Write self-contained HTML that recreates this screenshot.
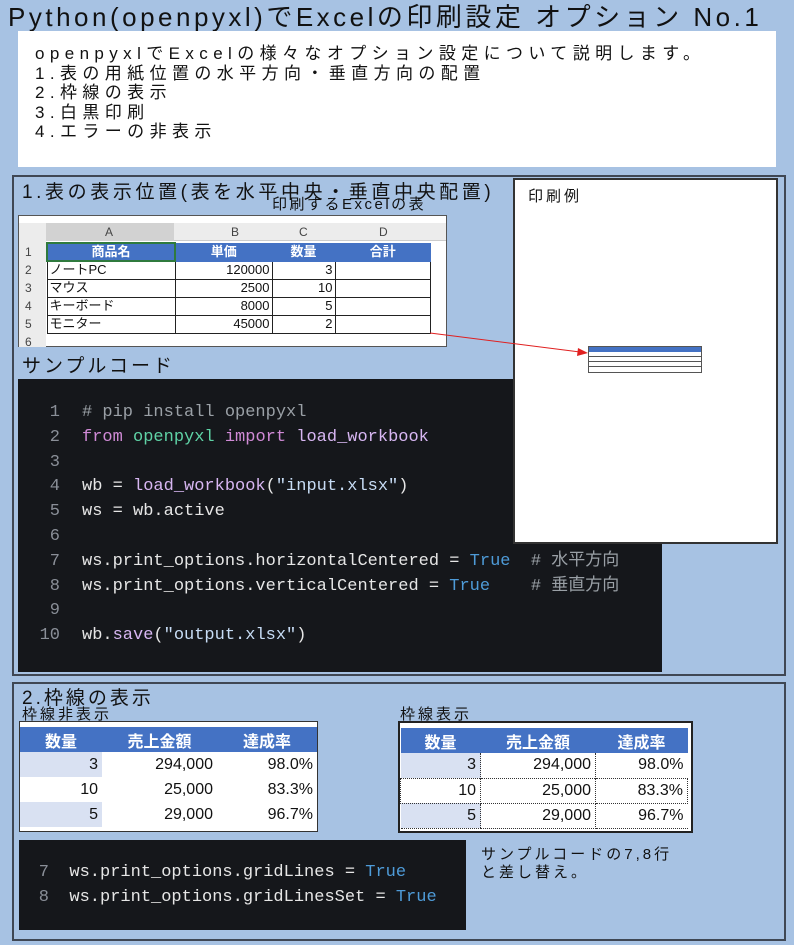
<!DOCTYPE html>
<html><head><meta charset="utf-8"><style>
*{margin:0;padding:0;box-sizing:border-box}
body{width:794px;height:945px;background:#a7c2e3;position:relative;overflow:hidden;font-family:"Liberation Sans","Noto Sans CJK JP",sans-serif;color:#111}
.a{position:absolute;white-space:nowrap}
.jp{letter-spacing:3px}
.box{position:absolute;border:2px solid #3f4754}
.code{position:absolute;background:#15171b;font-family:"Liberation Mono","Noto Sans CJK JP",monospace;font-size:17px;color:#e6e6e6}
.code .l{position:absolute;white-space:pre}
.n{color:#8a8f98;display:inline-block;text-align:right}
.kw{color:#d08ad6}.md{color:#5fd3a6}.fn{color:#d7b6f2}.tr{color:#4e9bd8}.cm{color:#9aa0a6}.st{color:#c7dcf5}
table{border-collapse:collapse}
.xt td{height:18px;line-height:16px;font-size:13px;border:1px solid #222;padding:0 2px}
.g td{font-size:16px;height:25px;padding:0 4px;text-align:right}
</style></head><body>
<div class="a" style="left:8px;top:0;font-size:26px;letter-spacing:3.5px;line-height:34px">Python(openpyxl)でExcelの印刷設定 オプション No.1</div>
<div class="a" style="left:18px;top:31px;width:758px;height:136px;background:#fff"></div>
<div class="a" style="left:35px;top:44px;font-size:17px;line-height:19.5px;letter-spacing:5.4px">openpyxlでExcelの様々なオプション設定について説明します。<br>1.表の用紙位置の水平方向・垂直方向の配置<br>2.枠線の表示<br>3.白黒印刷<br>4.エラーの非表示</div>

<div class="box" style="left:12px;top:175px;width:774px;height:501px"></div>
<div class="a" style="left:22px;top:177px;font-size:19px;letter-spacing:3.6px">1.表の表示位置(表を水平中央・垂直中央配置)</div>
<div class="a" style="left:272px;top:193px;font-size:15px;letter-spacing:2.5px">印刷するExcelの表</div>

<div class="a" style="left:18px;top:215px;width:429px;height:132px;background:#fff;border:1px solid #555">
 <div class="a" style="left:0;top:7px;width:427px;height:18px;background:#ececec;border-bottom:1px solid #ccc"></div>
 <div class="a" style="left:0;top:7px;width:27px;height:124px;background:#ececec"></div>
 <div class="a" style="left:27px;top:7px;width:128px;height:18px;background:#d2d2d2"></div>
 <div class="a" style="left:86px;top:9px;font-size:12px;color:#444">A</div>
 <div class="a" style="left:212px;top:9px;font-size:12px;color:#444">B</div>
 <div class="a" style="left:280px;top:9px;font-size:12px;color:#444">C</div>
 <div class="a" style="left:360px;top:9px;font-size:12px;color:#444">D</div>
 <div class="a" style="left:6px;top:27px;font-size:12px;line-height:18px;color:#444">1<br>2<br>3<br>4<br>5<br>6</div>
 <table class="xt a" style="left:27px;top:26px;width:385px">
  <tr style="background:#4472c4;color:#fff;font-weight:bold;text-align:center"><td style="width:128px;border:2px solid #2f7a3e">商品名</td><td style="width:97px;border-color:#4472c4">単価</td><td style="width:63px;border-color:#4472c4">数量</td><td style="border-color:#4472c4">合計</td></tr>
  <tr><td>ノートPC</td><td align="right">120000</td><td align="right">3</td><td></td></tr>
  <tr><td>マウス</td><td align="right">2500</td><td align="right">10</td><td></td></tr>
  <tr><td>キーボード</td><td align="right">8000</td><td align="right">5</td><td></td></tr>
  <tr><td>モニター</td><td align="right">45000</td><td align="right">2</td><td></td></tr>
 </table>
</div>

<div class="a" style="left:513px;top:178px;width:265px;height:366px;background:#fff;border:2px solid #333"></div>
<div class="a jp" style="left:528px;top:185px;font-size:15px">印刷例</div>
<div class="a" style="left:588px;top:346px;width:114px;height:27px;border:1px solid #555;background:#fff">
 <div style="height:5px;background:#4472c4"></div>
 <div style="height:5px;border-bottom:1px solid #555"></div><div style="height:5px;border-bottom:1px solid #555"></div><div style="height:5px;border-bottom:1px solid #555"></div>
</div>
<svg class="a" style="left:0;top:0" width="794" height="945"><line x1="430" y1="333" x2="580" y2="352" stroke="#e02020" stroke-width="1"/><polygon points="588,353 578,348 577,356" fill="#e02020"/></svg>

<div class="a jp" style="left:22px;top:351px;font-size:19px">サンプルコード</div>
<div class="code" style="left:18px;top:379px;width:644px;height:293px">
 <div class="l" style="left:0;top:22px;line-height:24.8px"><span class="n" style="width:42px;margin-right:22px">1</span><span class="cm"># pip install openpyxl</span>
<span class="n" style="width:42px;margin-right:22px">2</span><span class="kw">from</span> <span class="md">openpyxl</span> <span class="kw">import</span> <span class="fn">load_workbook</span>
<span class="n" style="width:42px;margin-right:22px">3</span>
<span class="n" style="width:42px;margin-right:22px">4</span>wb = <span class="fn">load_workbook</span>(<span class="st">"input.xlsx"</span>)
<span class="n" style="width:42px;margin-right:22px">5</span>ws = wb.active
<span class="n" style="width:42px;margin-right:22px">6</span>
<span class="n" style="width:42px;margin-right:22px">7</span>ws.print_options.horizontalCentered = <span class="tr">True</span>  <span class="cm"># 水平方向</span>
<span class="n" style="width:42px;margin-right:22px">8</span>ws.print_options.verticalCentered = <span class="tr">True</span>    <span class="cm"># 垂直方向</span>
<span class="n" style="width:42px;margin-right:22px">9</span>
<span class="n" style="width:42px;margin-right:22px">10</span>wb.<span class="fn">save</span>(<span class="st">"output.xlsx"</span>)</div>
</div>
<div class="a" style="left:513px;top:378px;width:265px;height:166px;background:#fff;border:2px solid #333;border-top:none"></div>

<div class="box" style="left:12px;top:682px;width:774px;height:259px"></div>
<div class="a jp" style="left:22px;top:683px;font-size:19px">2.枠線の表示</div>
<div class="a jp" style="left:22px;top:703px;font-size:15px">枠線非表示</div>
<div class="a jp" style="left:400px;top:703px;font-size:15px">枠線表示</div>

<div class="a" style="left:19px;top:721px;width:299px;height:111px;background:#fff;border:1px solid #333">
 <table class="g" style="margin-top:5px;width:297px">
  <tr style="background:#4472c4;color:#fff;font-weight:bold;text-align:center"><td style="text-align:center;width:82px">数量</td><td style="text-align:center;width:115px">売上金額</td><td style="text-align:center">達成率</td></tr>
  <tr><td style="background:#d9e1f2">3</td><td>294,000</td><td>98.0%</td></tr>
  <tr><td>10</td><td>25,000</td><td>83.3%</td></tr>
  <tr><td style="background:#d9e1f2">5</td><td>29,000</td><td>96.7%</td></tr>
 </table>
</div>
<div class="a" style="left:398px;top:721px;width:295px;height:112px;background:#fff;border:2px solid #222">
 <table class="g" style="margin-top:5px;width:288px">
  <tr style="background:#4472c4;color:#fff;font-weight:bold"><td style="text-align:center;width:80px">数量</td><td style="text-align:center;width:115px">売上金額</td><td style="text-align:center">達成率</td></tr>
  <tr><td style="background:#d9e1f2;border-right:1px dotted #333">3</td><td style="border-right:1px dotted #333">294,000</td><td>98.0%</td></tr>
  <tr><td style="border:1px dotted #333">10</td><td style="border:1px dotted #333">25,000</td><td style="border:1px dotted #333">83.3%</td></tr>
  <tr><td style="background:#d9e1f2;border-bottom:1px dotted #333">5</td><td style="border:1px dotted #333">29,000</td><td style="border-bottom:1px dotted #333">96.7%</td></tr>
 </table>
</div>

<div class="code" style="left:19px;top:840px;width:447px;height:90px">
 <div class="l" style="left:0;top:21px;line-height:24.5px"><span class="n" style="width:30px">7</span>  ws.print_options.gridLines = <span class="tr">True</span>
<span class="n" style="width:30px">8</span>  ws.print_options.gridLinesSet = <span class="tr">True</span></div>
</div>
<div class="a jp" style="left:481px;top:846px;font-size:15px;line-height:18px">サンプルコードの7,8行<br>と差し替え。</div>
</body></html>
